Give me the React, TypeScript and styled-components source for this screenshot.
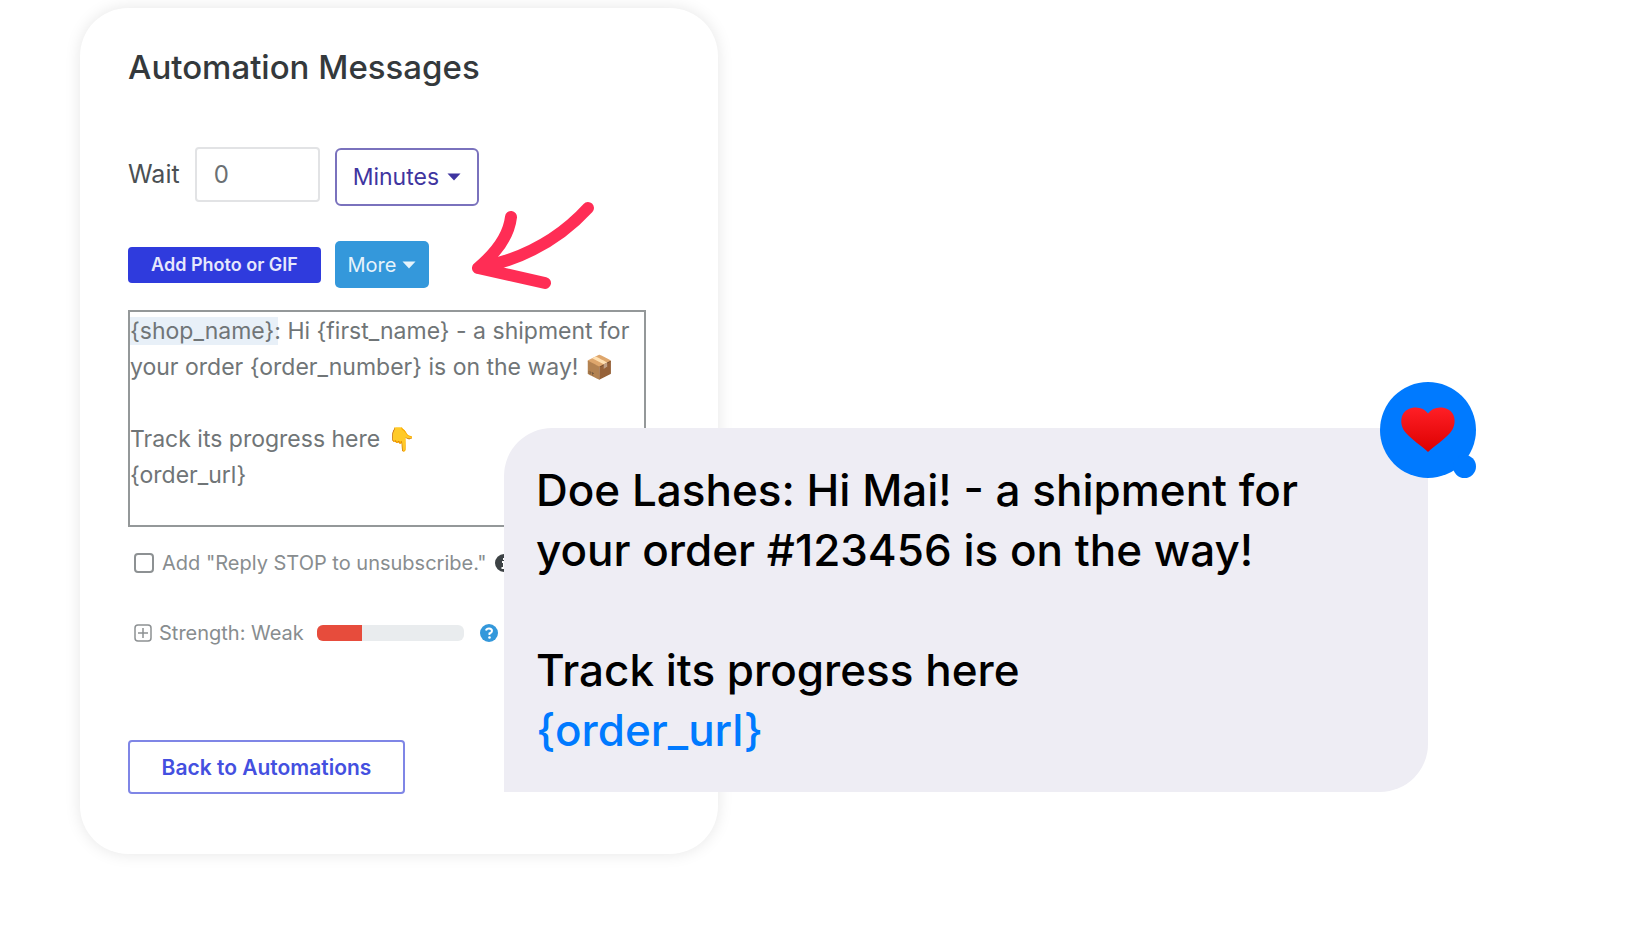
import React from "react";
import styled, { createGlobalStyle } from "styled-components";

const GlobalStyle = createGlobalStyle`
  *, *::before, *::after { box-sizing: border-box; }
  body {
    margin: 0;
    background: #fff;
    font-family: Inter, "Liberation Sans", sans-serif;
  }
  button, input, select, textarea { font: inherit; margin: 0; }
`;

const Stage = styled.main`
  display: grid;
  grid-template-columns:
    minmax(0, 80fr) minmax(0, 424fr) minmax(0, 214fr)
    minmax(0, 710fr) minmax(0, 212fr);
  padding: 8px 0 78px;
  overflow: hidden;
`;

const Card = styled.section`
  grid-column: 2 / 4;
  grid-row: 1;
  display: flex;
  flex-direction: column;
  align-items: flex-start;
  padding: 39px 72px 60px 48px;
  border-radius: 48px;
  background: #fff;
  box-shadow: 0 0 16px rgba(0, 0, 0, 0.1);
`;

const Title = styled.h1`
  margin: 0 0 60px;
  font-size: 33px;
  line-height: 40px;
  font-weight: 500;
  color: #34393c;
`;

const Row = styled.div<{ $after: number; $gap: number; $top?: boolean }>`
  position: relative;
  display: flex;
  align-items: ${(p) => (p.$top ? "flex-start" : "center")};
  gap: ${(p) => p.$gap}px;
  margin-bottom: ${(p) => p.$after}px;
`;

const WaitLabel = styled.label`
  font-size: 25px;
  line-height: 55px;
  color: #4b5053;
`;

const WaitInput = styled.input`
  width: 125px;
  height: 55px;
  padding: 0 17px;
  border: 2px solid #e2e3e5;
  border-radius: 4px;
  font-size: 24px;
  color: #6b7073;
`;

const SelectBox = styled.div`
  display: grid;
  align-items: center;
  padding-top: 1px;
  color: #3f35a0;

  & > * { grid-area: 1 / 1; }
  & > svg { justify-self: end; margin-right: 18px; pointer-events: none; }
`;

const UnitSelect = styled.select`
  appearance: none;
  width: 144px;
  height: 58px;
  padding: 0 16px;
  border: 2px solid #7a72bd;
  border-radius: 6px;
  background: #fff;
  font-size: 23px;
  color: inherit;
`;

const PhotoButton = styled.button`
  width: 193px;
  height: 36px;
  padding: 0;
  border: 0;
  border-radius: 4px;
  background: #2f3bdd;
  color: #e6e8fc;
  font-size: 18px;
  font-weight: 600;
`;

const MoreButton = styled.button`
  display: flex;
  align-items: center;
  justify-content: center;
  gap: 6px;
  width: 94px;
  height: 47px;
  padding: 0;
  border: 0;
  border-radius: 5px;
  background: #3498db;
  color: #e6f3fb;
  font-size: 20px;
`;

const ArrowMark = styled.svg`
  position: absolute;
  left: 344px;
  top: -41px;
`;

const Message = styled.textarea`
  display: block;
  width: 100%;
  height: 217px;
  margin-bottom: 22px;
  padding: 1px 0 0;
  border: 2px solid #949899;
  background: linear-gradient(#e8f0f8, #e8f0f8) 0 5px / 148px 28px no-repeat #fff;
  font-size: 23px;
  line-height: 36px;
  color: #707577;
  resize: none;
  overflow: hidden;
`;

const StopCheck = styled.input`
  appearance: none;
  width: 20px;
  height: 20px;
  border: 2px solid #8d9193;
  border-radius: 4px;
  background: #fff;
`;

const Note = styled.span`
  font-size: 20px;
  line-height: 28px;
  color: #888d8f;
  white-space: nowrap;
`;

const StopLabel = styled(Note).attrs({ as: "label" })<{ htmlFor?: string }>``;

const Options = styled.div`
  padding-left: 6px;
`;

const Meter = styled.div`
  width: 147px;
  height: 16px;
  margin: 0 9px 0 6px;
  border-radius: 6px;
  background: #e9ecee;
  overflow: hidden;
`;

const MeterFill = styled.div`
  width: 31%;
  height: 100%;
  background: #e74c3c;
`;

const BackButton = styled.button`
  width: 277px;
  height: 54px;
  margin-top: 50px;
  padding: 0;
  border: 2px solid #7f86e6;
  border-radius: 4px;
  background: #fff;
  color: #4450e0;
  font-size: 21px;
  font-weight: 600;
`;

const Bubble = styled.section`
  grid-column: 3 / 5;
  grid-row: 1;
  align-self: start;
  position: relative;
  margin-top: 420px;
  padding: 32px;
  border-radius: 48px 0 48px 0;
  background: #eeedf4;
`;

const BubbleText = styled.p`
  margin: 0 0 60px;
  font-size: 44px;
  line-height: 60px;
  font-weight: 500;
  color: #000;

  &:last-of-type { margin-bottom: 0; }
`;

const BubbleLink = styled.a`
  color: #007aff;
  text-decoration: none;
`;

const Reaction = styled.svg`
  position: absolute;
  top: -46px;
  right: -49px;
`;

const Caret = () => (
  <svg width="14" height="8" viewBox="0 0 14 8" aria-hidden="true">
    <path d="M0.5 0.5h13L7 7.5z" fill="currentColor" />
  </svg>
);

const message =
  "{shop_name}: Hi {first_name} - a shipment for\nyour order {order_number} is on the way! 📦\n\nTrack its progress here 👇\n{order_url}";

export default function App() {
  return (
    <>
      <GlobalStyle />
      <Stage>
        <Card>
          <Title>Automation Messages</Title>
          <Row $gap={15} $after={35} $top>
            <WaitLabel htmlFor="wait">Wait</WaitLabel>
            <WaitInput id="wait" defaultValue="0" />
            <SelectBox>
              <UnitSelect aria-label="Wait unit">
                <option>Minutes</option>
              </UnitSelect>
              <Caret />
            </SelectBox>
          </Row>
          <Row $gap={14} $after={22}>
            <PhotoButton type="button">Add Photo or GIF</PhotoButton>
            <MoreButton type="button">
              More <Caret />
            </MoreButton>
            <ArrowMark width="124" height="92" viewBox="472 200 124 92" aria-hidden="true">
              <path
                d="M588 208Q545 255 478 268Q508 243 511 217M478 268L545 283"
                fill="none"
                stroke="#ff2d55"
                strokeWidth="12"
                strokeLinecap="round"
                strokeLinejoin="round"
              />
            </ArrowMark>
          </Row>
          <Message aria-label="Message" spellCheck={false} defaultValue={message} />
          <Options>
            <Row $gap={8} $after={42}>
              <StopCheck type="checkbox" id="stop" />
              <StopLabel htmlFor="stop">Add "Reply STOP to unsubscribe."</StopLabel>
              <svg width="18" height="18" viewBox="0 0 18 18" aria-hidden="true">
                <circle cx="9" cy="9" r="9" fill="#3d4245" />
                <path d="M9 4v2M7 8h2v6M6.500 14h5" stroke="#fff" strokeWidth="2" fill="none" />
              </svg>
            </Row>
            <Row $gap={7} $after={43}>
              <svg width="18" height="18" viewBox="0 0 18 18" aria-hidden="true" fill="none" stroke="#8d9193" strokeWidth="1.500">
                <rect x="1" y="1" width="16" height="16" rx="3" />
                <path d="M9 4v10M4 9h10" />
              </svg>
              <Note>Strength: Weak</Note>
              <Meter>
                <MeterFill />
              </Meter>
              <svg width="18" height="18" viewBox="0 0 18 18" aria-hidden="true">
                <circle cx="9" cy="9" r="9" fill="#3498db" />
                <path d="M6 6.500Q6.500 4.500 9 4.500Q12 4.500 12 7Q12 8.500 9.500 9.500V11" fill="none" stroke="#fff" strokeWidth="2" />
                <circle cx="9.500" cy="13.500" r="1.300" fill="#fff" />
              </svg>
            </Row>
          </Options>
          <BackButton type="button">Back to Automations</BackButton>
        </Card>
        <Bubble>
          <BubbleText>
            Doe Lashes: Hi Mai! - a shipment for
            <br />
            your order #123456 is on the way!
          </BubbleText>
          <BubbleText>
            Track its progress here
            <br />
            <BubbleLink href="#order">{"{order_url}"}</BubbleLink>
          </BubbleText>
          <Reaction width="97" height="97" viewBox="0 0 97 97" role="img" aria-label="Loved">
            <defs>
              <linearGradient id="heart" x1="0" y1="0" x2="0" y2="1">
                <stop offset="0" stopColor="#ff1f26" />
                <stop offset="1" stopColor="#dc0000" />
              </linearGradient>
            </defs>
            <circle cx="48" cy="48" r="48" fill="#007aff" />
            <circle cx="84.500" cy="84.500" r="11.500" fill="#007aff" />
            <path
              d="M48 70C42 64 32 58 26 51C18 42 20 27 34 25.500C40 25 45 27 48 31.500C51 27 56 25 62 25.500C76 27 78 42 70 51C64 58 54 64 48 70Z"
              fill="url(#heart)"
            />
          </Reaction>
        </Bubble>
      </Stage>
    </>
  );
}
